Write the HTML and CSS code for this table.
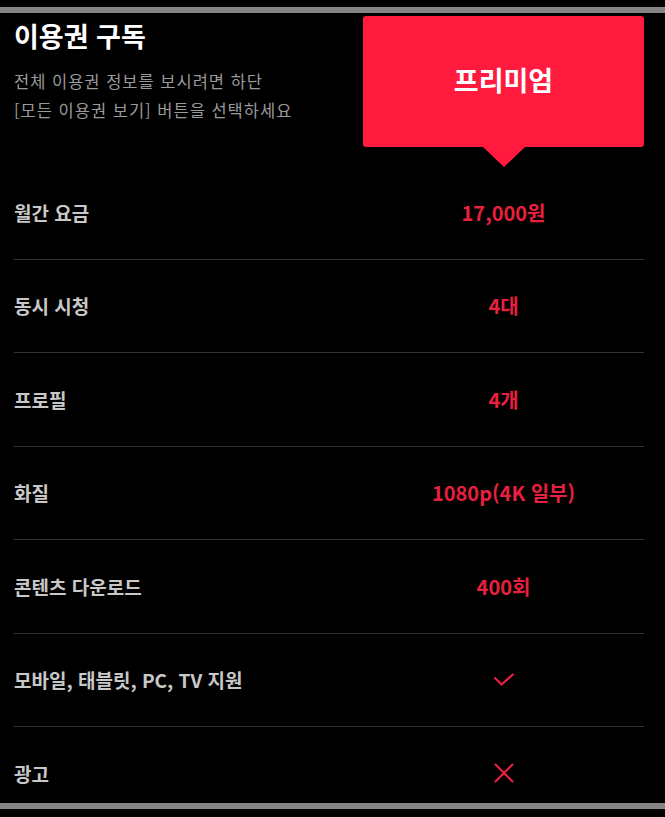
FILE: index.html
```html
<!DOCTYPE html>
<html lang="ko">
<head>
<meta charset="utf-8">
<title>이용권 구독</title>
<link rel="stylesheet" href="styles.css">
</head>
<body>
<div class="frame">
  <header class="head">
    <div class="intro">
      <h1 class="title">이용권 구독</h1>
      <p class="desc">전체 이용권 정보를 보시려면 하단<br>[모든 이용권 보기] 버튼을 선택하세요</p>
    </div>
    <div class="plan">프리미엄</div>
  </header>
  <div class="rows">
    <div class="row"><span class="label">월간 요금</span><span class="value">17,000원</span></div>
    <div class="row"><span class="label">동시 시청</span><span class="value">4대</span></div>
    <div class="row"><span class="label">프로필</span><span class="value">4개</span></div>
    <div class="row"><span class="label">화질</span><span class="value">1080p(4K 일부)</span></div>
    <div class="row"><span class="label">콘텐츠 다운로드</span><span class="value">400회</span></div>
    <div class="row"><span class="label">모바일, 태블릿, PC, TV 지원</span><span class="value"><svg class="icon" width="22" height="16" viewBox="0 0 22 16"><path d="M1.5 5.5 L8.5 12.5 L20.5 2" fill="none" stroke="#e8203e" stroke-width="2.2"/></svg></span></div>
    <div class="row"><span class="label">광고</span><span class="value"><svg class="icon" width="20" height="20" viewBox="0 0 20 20"><path d="M1 1 L19 19 M19 1 L1 19" fill="none" stroke="#e8203e" stroke-width="2.2"/></svg></span></div>
  </div>
</div>
</body>
</html>
```
FILE: styles.css
```css
html, body {
  margin: 0;
  padding: 0;
  background: #000;
}
body {
  padding-top: 7px;
  height: 810px;
  font-family: "Noto Sans CJK KR", "Noto Sans", sans-serif;
}
.frame {
  border-top: 6px solid #858585;
  border-bottom: 6px solid #858585;
  height: 790px;
  overflow: hidden;
  padding: 0 21px 0 14px;
}
.head {
  display: flex;
  justify-content: space-between;
  align-items: flex-start;
  height: 153px;
}
.intro {
  padding-top: 6px;
}
.title {
  margin: 0;
  font-size: 27px;
  line-height: 34px;
  font-weight: 700;
  color: #fff;
}
.desc {
  margin: 14px 0 0;
  font-size: 16.5px;
  line-height: 29px;
  color: #9a9a9a;
  letter-spacing: 1px;
}
.plan {
  position: relative;
  margin-top: 3px;
  width: 281px;
  height: 131px;
  background: #ff1a3e;
  border-radius: 3px;
  color: #fff;
  font-size: 27px;
  font-weight: 700;
  display: flex;
  align-items: center;
  justify-content: center;
  padding-bottom: 4px;
  box-sizing: border-box;
}
.plan::after {
  content: "";
  position: absolute;
  left: 50%;
  top: 100%;
  margin-left: -21px;
  border-left: 21px solid transparent;
  border-right: 21px solid transparent;
  border-top: 20px solid #ff1a3e;
}
.rows {
  display: flex;
  flex-direction: column;
}
.row {
  display: grid;
  grid-template-columns: 1fr 281px;
  align-items: center;
  height: 93.5px;
  box-sizing: border-box;
  border-bottom: 1px solid #333;
  flex-shrink: 0;
}
.label {
  font-size: 19px;
  font-weight: 700;
  color: #c8c8c8;
}
.value {
  text-align: center;
  font-size: 20px;
  font-weight: 700;
  color: #e8203e;
  display: flex;
  justify-content: center;
  align-items: center;
}
.icon {
  display: block;
}
```
